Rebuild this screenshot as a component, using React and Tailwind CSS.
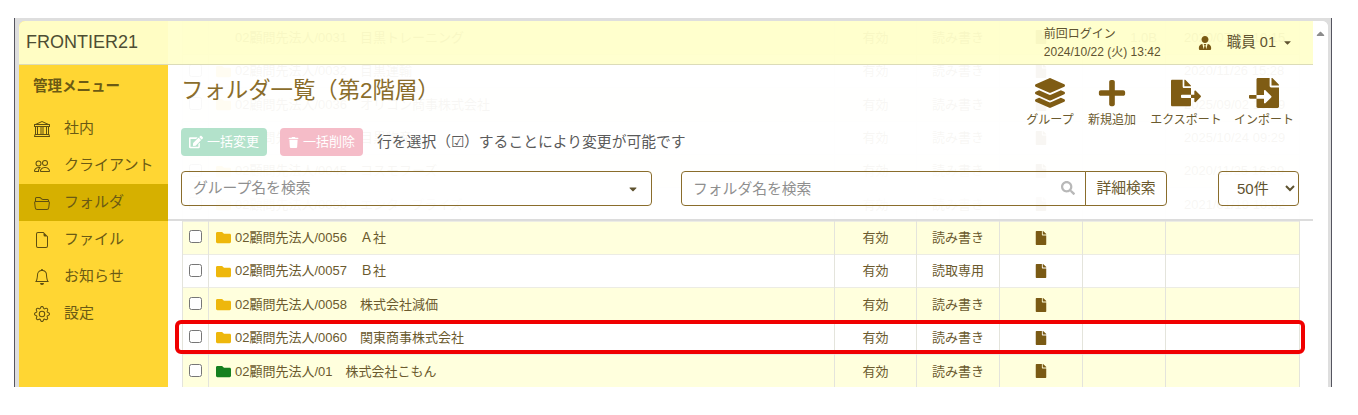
import { BsBank, BsPeople, BsFolder2Open, BsFileEarmark, BsBell, BsGear } from 'react-icons/bs'
import { FaLayerGroup, FaPlus, FaFileExport, FaFileImport, FaUserTie, FaFolder, FaFile, FaEdit, FaTrash, FaSearch, FaCaretDown, FaCaretUp } from 'react-icons/fa'

const menu = [
  { label: '社内', Icon: BsBank },
  { label: 'クライアント', Icon: BsPeople },
  { label: 'フォルダ', Icon: BsFolder2Open, active: true },
  { label: 'ファイル', Icon: BsFileEarmark },
  { label: 'お知らせ', Icon: BsBell },
  { label: '設定', Icon: BsGear },
]

const tools = [
  { label: 'グループ', Icon: FaLayerGroup, cls: 'w-[62px]' },
  { label: '新規追加', Icon: FaPlus, cls: 'w-[62px]' },
  { label: 'エクスポート', Icon: FaFileExport, cls: 'w-[86px]' },
  { label: 'インポート', Icon: FaFileImport, cls: 'w-[70px]' },
]

const rows = [
  { name: '02顧問先法人/0031　目黒トレーニング', access: '読み書き', size: '1.0B', date: '2020/07/28 10:15' },
  { name: '02顧問先法人/0032　目黒運輸', access: '読み書き', date: '2020/11/26 15:28' },
  { name: '02顧問先法人/0036　オリコン商事株式会社', access: '読み書き', date: '2025/09/02 10:19' },
  { name: '02顧問先法人/0040　目黒物産', access: '読み書き', date: '2025/10/24 09:29' },
  { name: '02顧問先法人/0045　コスモフーズ', access: '読み書き', date: '2020/11/25 16:29' },
  { name: '02顧問先法人/0050　エンタープライズ', access: '読み書き', date: '2021/01/19 10:02' },
  { name: '02顧問先法人/0056　Ａ社', access: '読み書き' },
  { name: '02顧問先法人/0057　Ｂ社', access: '読取専用' },
  { name: '02顧問先法人/0058　株式会社減価', access: '読み書き' },
  { name: '02顧問先法人/0060　関東商事株式会社', access: '読み書き' },
  { name: '02顧問先法人/01　株式会社こもん', access: '読み書き', green: true },
]

export default function App() {
  return (
    <div className="h-[415px] bg-white pt-[18px] pl-[14px] font-['Liberation_Sans','Noto_Sans_CJK_JP',sans-serif] text-[#6b5a2e]">
      <div className="w-[1318px] h-[369px] border-x border-[#55555f] bg-[#dedede] pt-[3px] pl-[4px] pr-[3px]">
        <div className="relative flex h-full overflow-hidden rounded-t-md bg-white">
          {/* Top bar lies over the scrolling table */}
          <header className="absolute top-0 left-0 right-[15px] z-20 h-[44px] flex items-center bg-[#ffffcc]/95 border-b border-[#dcdcb8] pl-[7px]">
            <span className="text-[18px] text-[#4d4d33]">FRONTIER21</span>
            <div className="ml-auto w-[154px] text-[12px] leading-[18px] text-[#5f5330]">
              <div>前回ログイン</div>
              <div>2024/10/22 (火) 13:42</div>
            </div>
            <FaUserTie className="text-[#7a5a14]" size={14} />
            <span className="ml-[15px] text-[14.5px] text-[#5f5330]">職員 01</span>
            <FaCaretDown className="ml-[6px] mr-[20px] text-[#5f5330]" size={11} />
          </header>

          <aside className="shrink-0 w-[149px] bg-[#ffd633] pt-[44px]">
            <div className="pl-[14px] pt-[11px] h-[45px] text-[14.5px] font-bold text-[#6b5a14]">管理メニュー</div>
            <nav className="flex flex-col">
              {menu.map(({ label, Icon, active }) => (
                <div
                  key={label}
                  className={`flex items-center h-[37px] pl-[15px] gap-[14px] text-[15px] text-[#6b5a14] ${active ? 'bg-[#d6b000]' : ''}`}
                >
                  <Icon size={16} className="text-[#5f4f10] shrink-0" />
                  <span>{label}</span>
                </div>
              ))}
            </nav>
          </aside>

          <main className="relative flex-1 min-w-0">
            <table className="ml-[14px] w-[1118px] table-fixed border-collapse text-[13px]">
              <colgroup>
                <col className="w-[26px]" />
                <col className="w-[626px]" />
                <col className="w-[82px]" />
                <col className="w-[83px]" />
                <col className="w-[83px]" />
                <col className="w-[83px]" />
                <col />
              </colgroup>
              <tbody>
                {rows.map((r, i) => (
                  <tr key={r.name} className={`h-[33.36px] border-b border-[#ecece4] ${i % 2 === 0 ? 'bg-[#ffffdd]' : 'bg-white'}`}>
                    <td className="border-x border-[#e4e4dc] text-center">
                      <input type="checkbox" className={`block mx-auto w-[13px] h-[13px] -translate-y-px ${i === 0 ? 'invisible' : ''}`} readOnly />
                    </td>
                    <td className="border-r border-[#e4e4dc] pl-[7px]">
                      <div className="flex items-center gap-[4px] whitespace-nowrap">
                        <FaFolder size={15} className={`${r.green ? 'text-[#15801f]' : 'text-[#eeb70c]'} ${i === 0 ? 'invisible' : ''}`} />
                        <span>{r.name}</span>
                      </div>
                    </td>
                    <td className="border-r border-[#e4e4dc] text-center">有効</td>
                    <td className="border-r border-[#e4e4dc] text-center">{r.access}</td>
                    <td className="border-r border-[#e4e4dc]">
                      <FaFile size={14} className="mx-auto text-[#7a5a14]" />
                    </td>
                    <td className="border-r border-[#e4e4dc] text-right pr-[8px]">{r.size}</td>
                    <td className="border-r border-[#e4e4dc] pl-[18px] whitespace-nowrap">{r.date}</td>
                  </tr>
                ))}
              </tbody>
            </table>

            {/* Fixed page head, translucent over the rows that have scrolled under it */}
            <section className="absolute top-[44px] left-0 right-[15px] h-[156px] z-10 bg-white/95 border-b-2 border-[#dcdcdc] pl-[13px] pr-[14px]">
              <div className="flex h-[63px]">
                <h1 className="pt-[11px] text-[22.4px] leading-[30px] text-[#8a6d2c]">フォルダ一覧（第2階層）</h1>
                <div className="ml-auto flex items-start pt-[13px]">
                  {tools.map(({ label, Icon, cls }) => (
                    <div key={label} className={`flex flex-col items-center ${cls}`}>
                      <Icon size={30} className="text-[#7f5c14]" />
                      <span className="mt-[4px] text-[12px] leading-[16px] whitespace-nowrap">{label}</span>
                    </div>
                  ))}
                </div>
              </div>
              <div className="flex items-center h-[28px]">
                <button className="flex items-center gap-[4px] w-[86px] h-[28px] justify-center rounded bg-[#b3e2cb] text-white text-[13px]">
                  <FaEdit size={14} />一括変更
                </button>
                <button className="ml-[13px] flex items-center gap-[4px] w-[83px] h-[28px] justify-center rounded bg-[#f5bcc8] text-white text-[13px]">
                  <FaTrash size={11} />一括削除
                </button>
                <span className="ml-[14px] text-[14.8px] text-[#5a5a5a]">行を選択（☑）することにより変更が可能です</span>
              </div>
              <div className="flex items-center mt-[15px] h-[35px]">
                <div className="flex items-center w-[471px] h-full rounded border border-[#8a6d2c] bg-white/60 pl-[11px] pr-[12px] text-[14.8px] text-[#8f8f8f]">
                  <span>グループ名を検索</span>
                  <FaCaretDown size={12} className="ml-auto text-[#5f5330]" />
                </div>
                <div className="relative ml-[29px] w-[405px] h-full">
                  <input
                    placeholder="フォルダ名を検索"
                    className="w-full h-full rounded-l border border-[#8a6d2c] bg-white/60 pl-[11px] pr-[30px] text-[14.8px] placeholder:text-[#8f8f8f] outline-none"
                  />
                  <FaSearch size={14} className="absolute right-[11px] top-[10px] text-[#b8b8b8]" />
                </div>
                <button className="w-[82px] h-full -ml-px rounded-r border border-[#8a6d2c] bg-white/60 text-[14.8px] text-[#6b5a2e]">詳細検索</button>
                <select className="ml-auto w-[81px] h-full rounded border border-[#8a6d2c] bg-white/60 pl-[14px] text-[15px] text-[#5f5330] outline-none">
                  <option>50件</option>
                </select>
              </div>
            </section>

            <div className="absolute top-0 right-0 bottom-0 w-[15px] z-10 bg-white flex justify-center pt-[6px]">
              <FaCaretUp size={13} className="text-[#8c8c8c]" />
            </div>

            {/* Annotation box round the fourth visible row */}
            <div className="absolute left-[7px] top-[299px] w-[1130px] h-[34px] z-30 rounded-md border-4 border-[#f00000]" />
          </main>
        </div>
      </div>
    </div>
  )
}
